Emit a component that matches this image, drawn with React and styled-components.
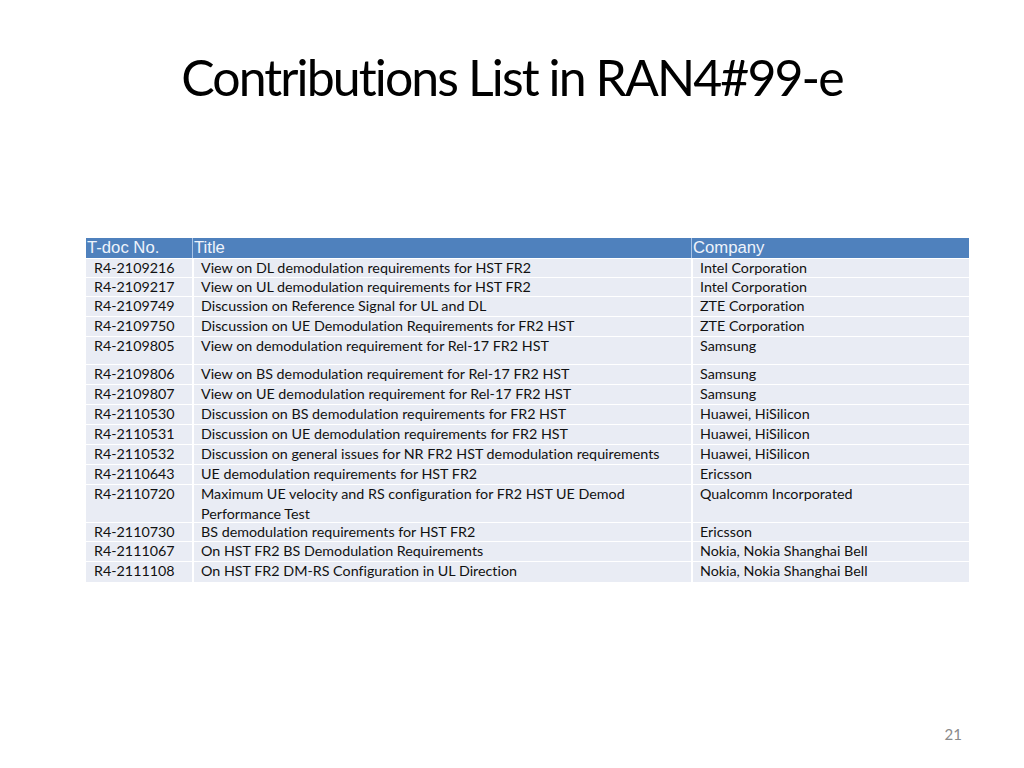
import React from 'react';
import styled, { createGlobalStyle } from 'styled-components';

const GlobalStyle = createGlobalStyle`
  html, body {
    margin: 0;
    padding: 0;
    background: #ffffff;
  }
`;

const rows = [
  { id: 'R4-2109216', title: ['View on DL demodulation requirements for HST FR2'], company: 'Intel Corporation', h: 19 },
  { id: 'R4-2109217', title: ['View on UL demodulation requirements for HST FR2'], company: 'Intel Corporation', h: 19 },
  { id: 'R4-2109749', title: ['Discussion on Reference Signal for UL and DL'], company: 'ZTE Corporation', h: 20 },
  { id: 'R4-2109750', title: ['Discussion on UE Demodulation Requirements for FR2 HST'], company: 'ZTE Corporation', h: 20 },
  { id: 'R4-2109805', title: ['View on demodulation requirement for Rel-17 FR2 HST'], company: 'Samsung', h: 28 },
  { id: 'R4-2109806', title: ['View on BS demodulation requirement for Rel-17 FR2 HST'], company: 'Samsung', h: 20 },
  { id: 'R4-2109807', title: ['View on UE demodulation requirement for Rel-17 FR2 HST'], company: 'Samsung', h: 20 },
  { id: 'R4-2110530', title: ['Discussion on BS demodulation requirements for FR2 HST'], company: 'Huawei, HiSilicon', h: 20 },
  { id: 'R4-2110531', title: ['Discussion on UE demodulation requirements for FR2 HST'], company: 'Huawei, HiSilicon', h: 20 },
  { id: 'R4-2110532', title: ['Discussion on general issues for NR FR2 HST demodulation requirements'], company: 'Huawei, HiSilicon', h: 20 },
  { id: 'R4-2110643', title: ['UE demodulation requirements for HST FR2'], company: 'Ericsson', h: 20 },
  { id: 'R4-2110720', title: ['Maximum UE velocity and RS configuration for FR2 HST UE Demod', 'Performance Test'], company: 'Qualcomm Incorporated', h: 38 },
  { id: 'R4-2110730', title: ['BS demodulation requirements for HST FR2'], company: 'Ericsson', h: 19 },
  { id: 'R4-2111067', title: ['On HST FR2 BS Demodulation Requirements'], company: 'Nokia, Nokia Shanghai Bell', h: 20 },
  { id: 'R4-2111108', title: ['On HST FR2 DM-RS Configuration in UL Direction'], company: 'Nokia, Nokia Shanghai Bell', h: 21 },
];

const Slide = styled.div`
  width: 1024px;
  height: 768px;
  display: flex;
  flex-direction: column;
  box-sizing: border-box;
  font-family: Lato, "Open Sans", sans-serif;
  font-variant-ligatures: none;
`;

const Heading = styled.h1`
  margin: 45px 0 0;
  height: 64px;
  text-align: center;
  font-family: Lato, "Open Sans", sans-serif;
  font-weight: 400;
  font-size: 50px;
  letter-spacing: -1.9px;
  line-height: 64px;
  color: #000;
`;

const Table = styled.div`
  margin: 129px 0 0 86px;
  width: 883px;
  display: flex;
  flex-direction: column;
`;

const HeaderRow = styled.div`
  display: grid;
  grid-template-columns: 106px 499px 278px;
  height: 20px;
  background: #4f81bd;
`;

const HeaderCell = styled.div`
  padding-left: 1px;
  border-left: ${p => (p.$first ? 'none' : '1px solid #a9c4e6')};
  font-family: "Liberation Sans", Arial, sans-serif;
  font-size: 16.7px;
  line-height: 20px;
  color: #eef3fb;
  white-space: nowrap;
`;

const Row = styled.div`
  display: grid;
  grid-template-columns: 106px 499px 278px;
  height: ${p => p.$h}px;
  box-sizing: border-box;
  border-top: 1px solid #ffffff;
  background: #e9ecf4;
`;

const Cell = styled.div`
  padding-left: ${p => (p.$first ? 8 : 7)}px;
  border-left: ${p => (p.$first ? 'none' : '2px solid #ffffff')};
  font-size: 14.3px;
  line-height: 20px;
  margin-top: -1px;
  color: #111;
  white-space: nowrap;
`;

const Footer = styled.div`
  margin-top: auto;
  display: flex;
  justify-content: flex-end;
  padding: 0 62px 25px 0;
`;

const PageNumber = styled.span`
  font-family: Lato, "Open Sans", sans-serif;
  font-size: 15px;
  color: #8a8a8a;
`;

export default function App() {
  return (
    <>
      <GlobalStyle />
      <Slide>
        <Heading>Contributions List in RAN4#99-e</Heading>
        <Table>
          <HeaderRow>
            <HeaderCell $first>T-doc No.</HeaderCell>
            <HeaderCell>Title</HeaderCell>
            <HeaderCell>Company</HeaderCell>
          </HeaderRow>
          {rows.map(r => (
            <Row key={r.id} $h={r.h}>
              <Cell $first>{r.id}</Cell>
              <Cell>
                {r.title.map(line => (
                  <div key={line}>{line}</div>
                ))}
              </Cell>
              <Cell>{r.company}</Cell>
            </Row>
          ))}
        </Table>
        <Footer>
          <PageNumber>21</PageNumber>
        </Footer>
      </Slide>
    </>
  );
}
